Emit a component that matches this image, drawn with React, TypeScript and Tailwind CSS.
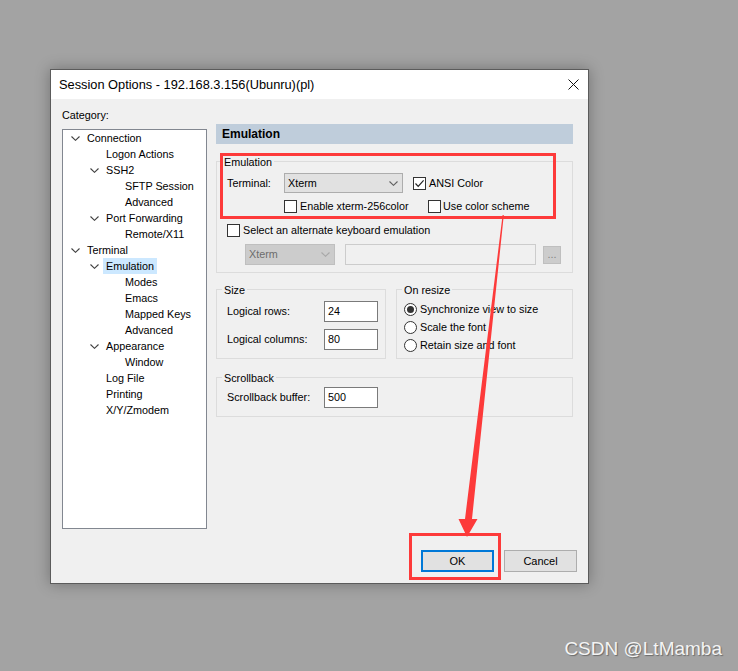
import React from "react";

type Node = { label: string; level: 0 | 1 | 2; caret?: boolean; selected?: boolean };

const tree: Node[] = [
  { label: "Connection", level: 0, caret: true },
  { label: "Logon Actions", level: 1 },
  { label: "SSH2", level: 1, caret: true },
  { label: "SFTP Session", level: 2 },
  { label: "Advanced", level: 2 },
  { label: "Port Forwarding", level: 1, caret: true },
  { label: "Remote/X11", level: 2 },
  { label: "Terminal", level: 0, caret: true },
  { label: "Emulation", level: 1, caret: true, selected: true },
  { label: "Modes", level: 2 },
  { label: "Emacs", level: 2 },
  { label: "Mapped Keys", level: 2 },
  { label: "Advanced", level: 2 },
  { label: "Appearance", level: 1, caret: true },
  { label: "Window", level: 2 },
  { label: "Log File", level: 1 },
  { label: "Printing", level: 1 },
  { label: "X/Y/Zmodem", level: 1 },
];

const indent = ["w-[8px]", "w-[27px]", "w-[46px]"];

function Caret({ color = "#404040" }: { color?: string }) {
  return (
    <svg width="9" height="5" viewBox="0 0 9 5">
      <path d="M0.5 0.5 L4.5 4.3 L8.5 0.5" fill="none" stroke={color} strokeWidth="1.1" />
    </svg>
  );
}

function Check({ checked }: { checked?: boolean }) {
  return (
    <span className="w-[13px] h-[13px] border border-[#333] bg-white flex items-center justify-center shrink-0">
      {checked && (
        <svg width="11" height="11" viewBox="0 0 11 11">
          <path d="M1.5 5.5 L4.2 8.3 L9.6 2.4" fill="none" stroke="#222" strokeWidth="1.2" />
        </svg>
      )}
    </span>
  );
}

function Radio({ on }: { on?: boolean }) {
  return (
    <span className="w-[13px] h-[13px] rounded-full border border-[#333] bg-white flex items-center justify-center shrink-0">
      {on && <span className="w-[7px] h-[7px] rounded-full bg-[#333]" />}
    </span>
  );
}

function Group({ title, className, children }: { title: string; className: string; children: React.ReactNode }) {
  return (
    <div className={`border border-[#dcdcdc] ${className}`}>
      <div className="-mt-[8px] ml-[5px] px-[2px] w-fit h-4 leading-4 bg-[#f0f0f0]">{title}</div>
      {children}
    </div>
  );
}

function Field({ value }: { value: string }) {
  return (
    <div className="w-[54px] h-[21px] border border-[#7a7a7a] bg-white pl-[3px] flex items-center">{value}</div>
  );
}

export default function App() {
  return (
    <div className="relative w-[738px] h-[671px] bg-[#a3a3a3] overflow-hidden font-['Liberation_Sans',Arial,sans-serif] text-[10.8px] text-black">
      <div className="pt-[69px] pl-[50px]">
        <div className="w-[539px] h-[515px] border border-[#5b5b5b] bg-[#f0f0f0] flex flex-col shadow-[0_0_14px_rgba(0,0,0,0.3)]">
          {/* title bar */}
          <div className="h-[29px] bg-white flex items-center justify-between pl-[8px] pr-[9px] shrink-0">
            <span className="text-[12.8px]">Session Options - 192.168.3.156(Ubunru)(pl)</span>
            <svg width="11" height="11" viewBox="0 0 11 11">
              <path d="M0.5 0.5 L10.5 10.5 M10.5 0.5 L0.5 10.5" stroke="#111" strokeWidth="1" />
            </svg>
          </div>

          <div className="flex-1 flex flex-col">
            <div className="flex">
              {/* category tree */}
              <div className="ml-[11px] w-[145px] flex flex-col">
                <div className="pt-[8px] h-6 leading-4">Category:</div>
                <div className="mt-[6px] h-[400px] border border-[#828790] bg-white">
                  {tree.map((n, i) => (
                    <div key={i} className="flex items-center h-4 leading-4">
                      <div className={`${indent[n.level]} shrink-0`} />
                      <div className="w-[16px] shrink-0 flex items-center">{n.caret && <Caret />}</div>
                      {n.selected ? (
                        <span className="-ml-[3px] px-[3px] bg-[#cce8ff]">{n.label}</span>
                      ) : (
                        <span>{n.label}</span>
                      )}
                    </div>
                  ))}
                </div>
              </div>

              {/* settings */}
              <div className="ml-[9px] w-[357px] pt-[25px] flex flex-col">
                <div className="h-[20px] bg-[#bfcddb] font-bold text-[12px] pl-[6px] flex items-center">Emulation</div>

                <Group title="Emulation" className="mt-[17px] h-[112px]">
                  <div className="mt-[3px] h-[20px] pl-[10px] flex items-center">
                    <span className="w-[57px]">Terminal:</span>
                    <div className="w-[119px] h-[20px] border border-[#adadad] bg-[#e1e1e1] pl-[3px] pr-[4px] flex items-center justify-between">
                      <span>Xterm</span>
                      <Caret color="#606060" />
                    </div>
                    <div className="ml-[10px] flex items-center gap-[3px]">
                      <Check checked />
                      <span>ANSI Color</span>
                    </div>
                  </div>
                  <div className="mt-[7px] h-[13px] pl-[67px] flex items-center">
                    <div className="w-[144px] flex items-center gap-[3px]">
                      <Check />
                      <span>Enable xterm-256color</span>
                    </div>
                    <div className="flex items-center gap-[2px]">
                      <Check />
                      <span>Use color scheme</span>
                    </div>
                  </div>
                  <div className="mt-[11px] h-[13px] pl-[10px] flex items-center gap-[3px]">
                    <Check />
                    <span>Select an alternate keyboard emulation</span>
                  </div>
                  <div className="mt-[7px] pl-[28px] flex items-center">
                    <div className="w-[90px] h-[21px] border border-[#bfbfbf] bg-[#cccccc] text-[#6d6d6d] pl-[3px] pr-[4px] flex items-center justify-between">
                      <span>Xterm</span>
                      <Caret color="#a8a8a8" />
                    </div>
                    <div className="ml-[10px] w-[191px] h-[21px] border border-[#cccccc] bg-[#f0f0f0]" />
                    <div className="ml-[7px] w-[18px] h-[18px] border border-[#bfbfbf] bg-[#cccccc] text-[#838383] leading-[14px] text-center">
                      ...
                    </div>
                  </div>
                </Group>

                <div className="mt-[16px] flex gap-[10px]">
                  <Group title="Size" className="w-[170px] h-[70px]">
                    <div className="mt-[3px] pl-[10px] flex items-center">
                      <span className="w-[97px]">Logical rows:</span>
                      <Field value="24" />
                    </div>
                    <div className="mt-[7px] pl-[10px] flex items-center">
                      <span className="w-[97px]">Logical columns:</span>
                      <Field value="80" />
                    </div>
                  </Group>
                  <Group title="On resize" className="w-[177px] h-[70px]">
                    <div className="mt-[2px] pl-[7px] flex flex-col">
                      {["Synchronize view to size", "Scale the font", "Retain size and font"].map((t, i) => (
                        <div key={t} className="h-[18px] flex items-center gap-[3px]">
                          <Radio on={i === 0} />
                          <span>{t}</span>
                        </div>
                      ))}
                    </div>
                  </Group>
                </div>

                <Group title="Scrollback" className="mt-[18px] h-[40px]">
                  <div className="mt-[1px] pl-[10px] flex items-center">
                    <span className="w-[97px]">Scrollback buffer:</span>
                    <Field value="500" />
                  </div>
                </Group>
              </div>
            </div>

            {/* buttons */}
            <div className="mt-auto pr-[11px] pb-[11px] flex justify-end gap-[10px]">
              <button className="w-[73px] h-[22px] border-2 border-[#0078d7] bg-[#e1e1e1] text-[11px]">OK</button>
              <button className="w-[73px] h-[22px] border border-[#adadad] bg-[#e1e1e1] text-[11px]">Cancel</button>
            </div>
          </div>
        </div>
      </div>

      {/* annotations */}
      <div className="absolute left-[220px] top-[153px] w-[336px] h-[66px] border-[3px] border-[#fd3a3a] pointer-events-none" />
      <div className="absolute left-[409px] top-[533px] w-[92px] h-[47px] border-[3px] border-[#fd3a3a] pointer-events-none" />
      <svg className="absolute inset-0 pointer-events-none" width="738" height="671" viewBox="0 0 738 671">
        <polygon
          points="502.6,215 503.8,215 472,519 477.5,519 467,537 458.5,519 465,519"
          fill="#fd3a3a"
        />
      </svg>

      <div className="absolute right-[16px] bottom-[8px] text-[19px] text-[#f4f4f4] [text-shadow:1px_1px_1px_rgba(0,0,0,0.35)]">
        CSDN @LtMamba
      </div>
    </div>
  );
}
